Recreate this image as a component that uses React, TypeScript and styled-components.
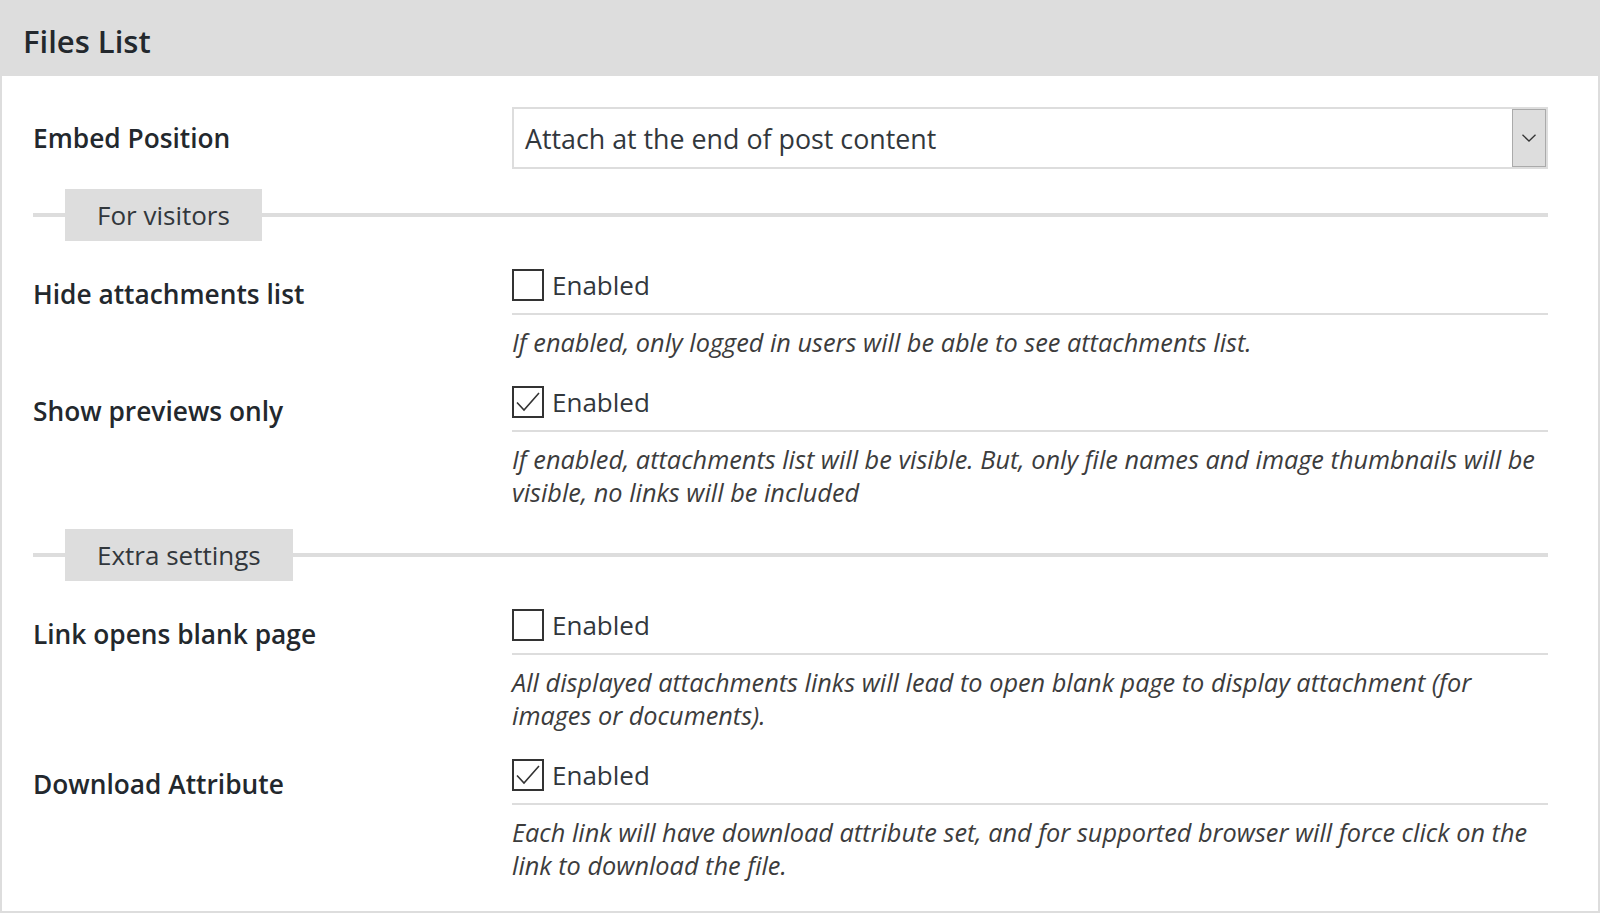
import React from "react";
import styled, { createGlobalStyle } from "styled-components";

const GlobalStyle = createGlobalStyle`
  body {
    margin: 0;
    background: #fff;
    font-family: "Open Sans", "Noto Sans", sans-serif;
    color: #23282d;
  }
`;

const Panel = styled.div`
  border: 2px solid #ddd;
  border-top: 0;
  box-sizing: border-box;
  width: 1600px;
`;

const Header = styled.div`
  background: #ddd;
  height: 76px;
  box-sizing: border-box;
  display: flex;
  align-items: center;
  padding: 6px 0 0 23px;
  margin: 0 -2px;
`;

const Title = styled.h2`
  margin: 0;
  font-size: 31px;
  font-weight: 600;
  color: #23282d;
`;

const Body = styled.div`
  padding: 31px 50px 29px 31px;
  display: flex;
  flex-direction: column;
`;

const Row = styled.div<{ $center?: boolean }>`
  display: grid;
  grid-template-columns: 479px 1fr;
  align-items: ${(p) => (p.$center ? "center" : "start")};

  & + & {
    margin-top: 27px;
  }
`;

const Label = styled.div<{ $offset?: number }>`
  font-size: 26.3px;
  font-weight: 600;
  line-height: 36px;
  color: #23282d;
  padding-top: ${(p) => p.$offset ?? 0}px;
`;

const Select = styled.div`
  display: flex;
  height: 62px;
  box-sizing: border-box;
  border: 2px solid #ddd;
  background: #fff;
`;

const SelectValue = styled.div`
  flex: 1;
  display: flex;
  align-items: center;
  padding-left: 11px;
  font-size: 26.8px;
  color: #32373c;
`;

const SelectArrow = styled.div`
  width: 34px;
  box-sizing: border-box;
  background: #ddd;
  border: 1px solid #aaa;
  display: flex;
  align-items: center;
  justify-content: center;
`;

const Divider = styled.div`
  display: flex;
  align-items: center;
  margin: 20px 0 28px 0;
`;

const DividerLine = styled.div<{ $grow?: boolean }>`
  height: 4px;
  background: #ddd;
  width: 32px;
  flex: ${(p) => (p.$grow ? 1 : "none")};
`;

const Tag = styled.div`
  background: #ddd;
  height: 52px;
  display: flex;
  align-items: center;
  padding: 0 32px;
  font-size: 26px;
  color: #32373c;
`;

const Field = styled.div`
  display: flex;
  flex-direction: column;
`;

const CheckLine = styled.label`
  display: flex;
  align-items: center;
  gap: 8px;
  line-height: 32px;
  padding-bottom: 12px;
  border-bottom: 2px solid #ddd;
  font-size: 26px;
  color: #32373c;
`;

const Box = styled.span`
  width: 32px;
  height: 32px;
  box-sizing: border-box;
  border: 2px solid #333;
  display: flex;
  align-items: center;
  justify-content: center;
  background: #fff;
`;

const Desc = styled.p`
  margin: 11px 0 0;
  font-size: 25.3px;
  font-style: italic;
  line-height: 33px;
  color: #3c3c3c;
`;

const Check = ({ checked }: { checked: boolean }) => (
  <Box>
    {checked && (
      <svg width="28" height="28" viewBox="0 0 28 28">
        <path
          d="M3 14.5 L10 22 L25 5"
          fill="none"
          stroke="#333"
          strokeWidth="1.6"
        />
      </svg>
    )}
  </Box>
);

type Setting = { label: string; checked: boolean; desc: string };

const visitorSettings: Setting[] = [
  {
    label: "Hide attachments list",
    checked: false,
    desc: "If enabled, only logged in users will be able to see attachments list.",
  },
  {
    label: "Show previews only",
    checked: true,
    desc: "If enabled, attachments list will be visible. But, only file names and image thumbnails will be visible, no links will be included",
  },
];

const extraSettings: Setting[] = [
  {
    label: "Link opens blank page",
    checked: false,
    desc: "All displayed attachments links will lead to open blank page to display attachment (for images or documents).",
  },
  {
    label: "Download Attribute",
    checked: true,
    desc: "Each link will have download attribute set, and for supported browser will force click on the link to download the file.",
  },
];

const SettingRow = ({ s }: { s: Setting }) => (
  <Row>
    <Label $offset={7}>{s.label}</Label>
    <Field>
      <CheckLine>
        <Check checked={s.checked} />
        Enabled
      </CheckLine>
      <Desc>{s.desc}</Desc>
    </Field>
  </Row>
);

const SectionDivider = ({ title }: { title: string }) => (
  <Divider>
    <DividerLine />
    <Tag>{title}</Tag>
    <DividerLine $grow />
  </Divider>
);

export default function App() {
  return (
    <>
      <GlobalStyle />
      <Panel>
        <Header>
          <Title>Files List</Title>
        </Header>
        <Body>
          <Row $center>
            <Label>Embed Position</Label>
            <Select>
              <SelectValue>Attach at the end of post content</SelectValue>
              <SelectArrow>
                <svg width="14" height="8" viewBox="0 0 14 8">
                  <path d="M0.5 0.8 L7 7 L13.5 0.8" fill="none" stroke="#333" strokeWidth="1.3" />
                </svg>
              </SelectArrow>
            </Select>
          </Row>
          <SectionDivider title="For visitors" />
          {visitorSettings.map((s) => (
            <SettingRow key={s.label} s={s} />
          ))}
          <SectionDivider title="Extra settings" />
          {extraSettings.map((s) => (
            <SettingRow key={s.label} s={s} />
          ))}
        </Body>
      </Panel>
    </>
  );
}
